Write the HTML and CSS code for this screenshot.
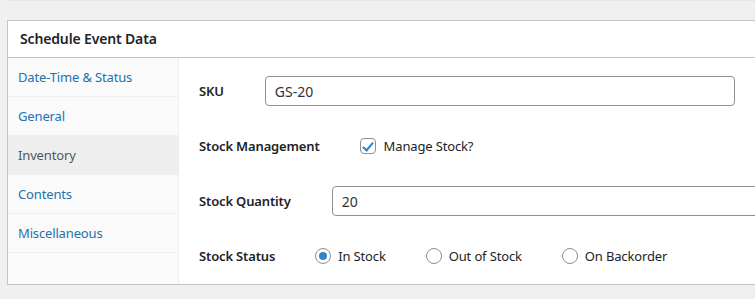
FILE: index.html
```html
<!DOCTYPE html>
<html lang="en">
<head>
  <meta charset="UTF-8">
  <meta name="viewport" content="width=device-width, initial-scale=1.0">
  <title>Schedule Event Data</title>
  <link rel="stylesheet" href="styles.css">
</head>
<body>
  <div class="top-strip"></div>

  <div class="postbox">
    <h2 class="postbox-title">Schedule Event Data</h2>

    <div class="panel-wrap">
      <ul class="tabs">
        <li><a href="#">Date-Time &amp; Status</a></li>
        <li><a href="#">General</a></li>
        <li class="active"><a href="#">Inventory</a></li>
        <li><a href="#">Contents</a></li>
        <li><a href="#">Miscellaneous</a></li>
      </ul>

      <div class="panel">
        <div class="field">
          <label class="field-label" for="sku">SKU</label>
          <input type="text" id="sku" class="text-input" value="GS-20">
        </div>

        <div class="field">
          <span class="field-label">Stock Management</span>
          <label class="option">
            <span class="check checked"></span>
            Manage Stock?
          </label>
        </div>

        <div class="field">
          <label class="field-label" for="qty">Stock Quantity</label>
          <input type="text" id="qty" class="text-input" value="20">
        </div>

        <div class="field">
          <span class="field-label">Stock Status</span>
          <label class="option"><span class="radio checked"></span>In Stock</label>
          <label class="option"><span class="radio"></span>Out of Stock</label>
          <label class="option"><span class="radio"></span>On Backorder</label>
        </div>
      </div>
    </div>
  </div>
</body>
</html>
```

FILE: styles.css
```css
html, body {
  overflow: hidden;
}
body {
  margin: 0;
  background-color: #f0f0f1;
  font-family: "Noto Sans", "Open Sans", sans-serif;
  font-size: 13px;
  letter-spacing: -0.15px;
  color: #1d2327;
}
.top-strip {
  height: 1px;
  margin-left: 7px;
  background-color: #e6e6e6;
}
.postbox {
  width: 820px;
  margin: 19px 0 0 7px;
  background-color: #fff;
  border: 1px solid #c3c4c7;
}
.postbox-title {
  margin: 0;
  height: 36px;
  line-height: 36px;
  padding-left: 12px;
  font-size: 14px;
  font-weight: 600;
  border-bottom: 1px solid #c3c4c7;
}
.panel-wrap {
  display: flex;
  height: 226px;
}
.tabs {
  list-style: none;
  margin: 0;
  padding: 0;
  width: 170px;
  background-color: #fafafa;
  border-right: 1px solid #eee;
}
.tabs li {
  height: 38px;
  line-height: 38px;
  border-bottom: 1px solid #eee;
}
.tabs a {
  display: block;
  padding-left: 10px;
  color: #2271b1;
  text-decoration: none;
}
.tabs li.active {
  background-color: #eee;
}
.tabs li.active a {
  color: #50575e;
}
.panel {
  flex: 1;
  padding: 18px 0 0 20px;
  display: flex;
  flex-direction: column;
  gap: 25px;
}
.field {
  display: flex;
  align-items: center;
  height: 30px;
}
.field-label {
  font-weight: 600;
  margin-right: 40px;
}
.text-input {
  width: 470px;
  height: 30px;
  box-sizing: border-box;
  padding: 0 9px;
  margin-left: 1px;
  border: 1px solid #8c8f94;
  border-radius: 4px;
  font-family: inherit;
  font-size: 14px;
  letter-spacing: 0;
  color: #2c3338;
}
.option {
  display: flex;
  align-items: center;
  margin-right: 40px;
}
.check,
.radio {
  width: 16px;
  height: 16px;
  box-sizing: border-box;
  border: 1px solid #8c8f94;
  margin-right: 7px;
  background-color: #fff;
  position: relative;
}
.check {
  border-radius: 4px;
  margin-right: 8px;
}
.check.checked::after {
  content: "";
  position: absolute;
  left: 4px;
  top: 1px;
  width: 4px;
  height: 9px;
  border: solid #3582c4;
  border-width: 0 2px 2px 0;
  transform: rotate(40deg);
}
.radio {
  border-radius: 50%;
}
.radio.checked::after {
  content: "";
  position: absolute;
  left: 3px;
  top: 3px;
  width: 8px;
  height: 8px;
  border-radius: 50%;
  background-color: #3582c4;
}
```
